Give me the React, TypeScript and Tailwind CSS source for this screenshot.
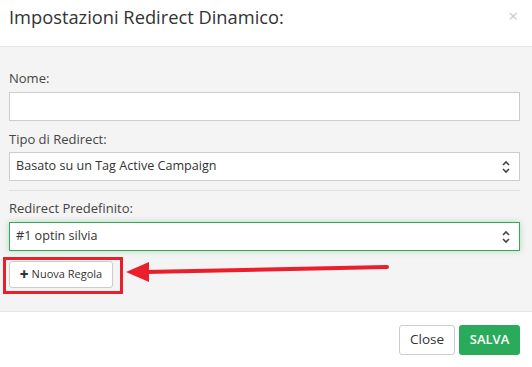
import React from "react";

const Chevrons = () => (
  <svg width="10" height="16" viewBox="0 0 10 16" className="text-[#444]">
    <path d="M2 6 L5 3 L8 6" fill="none" stroke="currentColor" strokeWidth="1.6" />
    <path d="M2 10 L5 13 L8 10" fill="none" stroke="currentColor" strokeWidth="1.6" />
  </svg>
);

const Select = ({ value, focused }: { value: string; focused?: boolean }) => (
  <div
    className={
      focused
        ? "flex h-[29px] w-full items-center justify-between border border-[#3aa65a] bg-white pl-[6px] pr-[8px] text-[12.6px] text-[#333] shadow-[0_0_6px_rgba(60,170,90,0.35)]"
        : "flex h-[29px] w-full items-center justify-between border border-[#cccccc] bg-white pl-[6px] pr-[8px] text-[12.6px] text-[#333]"
    }
  >
    <span>{value}</span>
    <Chevrons />
  </div>
);

export default function App() {
  return (
    <div
      className="relative h-[367px] w-[532px] bg-white"
      style={{ fontFamily: '"Open Sans", "Liberation Sans", sans-serif' }}
    >
      <div className="flex h-[47px] items-start justify-between border-b border-[#e5e5e5] pl-[9px] pr-[14px] pt-[5px]">
        <h4 className="text-[18.3px] leading-[24px] text-[#333]">Impostazioni Redirect Dinamico:</h4>
        <span className="mt-[2px] text-[17px] leading-none text-[#c8c8c8]">×</span>
      </div>

      <div className="h-[264px] bg-[#f4f4f4] px-[9px] pr-[12px] pt-[22px]">
        <label className="block text-[13px] leading-[18px] text-[#444]">Nome:</label>
        <div className="mt-[5px] h-[29px] w-full border border-[#cccccc] bg-white" />

        <label className="mt-[9px] block text-[13px] leading-[18px] text-[#444]">Tipo di Redirect:</label>
        <div className="mt-[4px]">
          <Select value="Basato su un Tag Active Campaign" />
        </div>

        <div className="mt-[9px] border-t border-[#e0e0e0]" />

        <label className="mt-[8px] block text-[13px] leading-[18px] text-[#444]">Redirect Predefinito:</label>
        <div className="mt-[5px]">
          <Select value="#1 optin silvia" focused />
        </div>

        <div className="relative mt-[10px] inline-block">
          <button className="flex h-[27px] w-[104px] items-center justify-center gap-[3px] rounded-[3px] border border-[#cccccc] bg-white text-[11px] text-[#333]">
            <span className="text-[15px] font-extrabold leading-none">+</span>
            <span>Nuova Regola</span>
          </button>
          <div className="absolute left-[-6px] top-[-4px] h-[37px] w-[120px] border-[3px] border-[#e8202a]" />
        </div>
      </div>

      <svg
        className="absolute left-0 top-0"
        width="532"
        height="367"
        viewBox="0 0 532 367"
      >
        <line x1="145" y1="272" x2="387" y2="267" stroke="#ea1f2b" strokeWidth="4" strokeLinecap="round" />
        <polygon points="126,272 149,262 149,282" fill="#ea1f2b" />
      </svg>

      <div className="flex h-[56px] items-center justify-end gap-[4px] border-t border-[#e5e5e5] pr-[12px]">
        <button className="h-[30px] w-[56px] rounded-[3px] border border-[#cccccc] bg-white text-[13.5px] text-[#333]">
          Close
        </button>
        <button className="h-[30px] w-[61px] rounded-[3px] bg-[#2aab5c] text-[13px] font-semibold text-white">
          SALVA
        </button>
      </div>
    </div>
  );
}
